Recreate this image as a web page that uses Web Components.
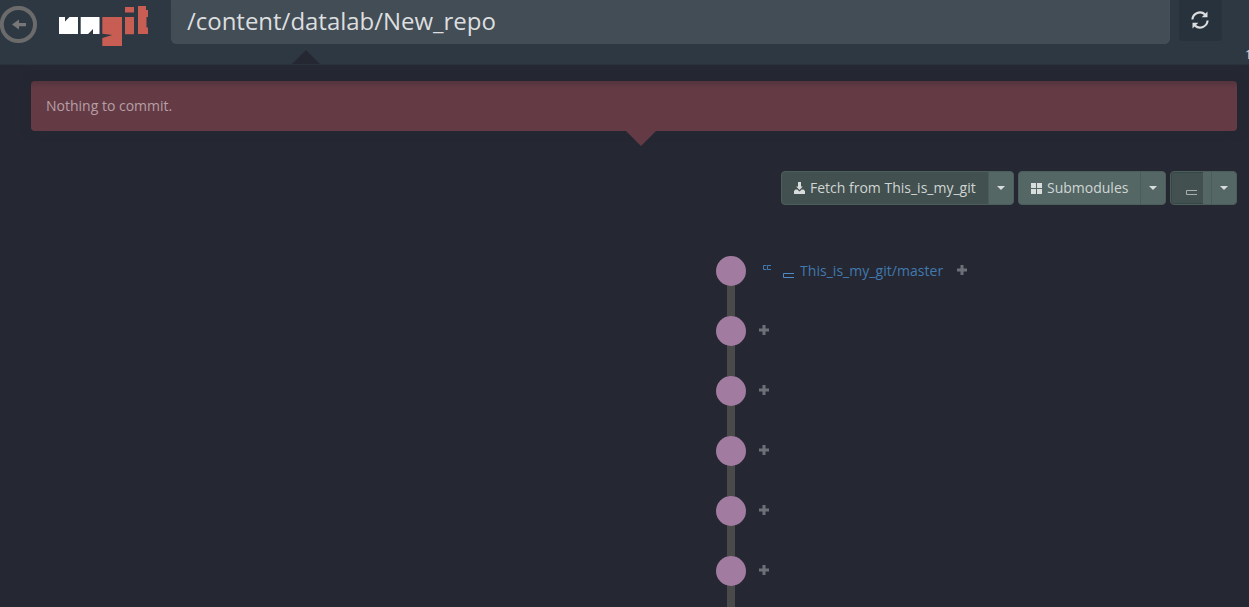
<!DOCTYPE html>
<html lang="en">
<head>
<meta charset="utf-8">
<title>ungit</title>
<style>
html, body { margin: 0; height: 100%; overflow: hidden; background: #252833; }
body { font: 14px/20px "Open Sans", "Noto Sans", sans-serif; color: #d8d8d8; }
</style>
</head>
<body>
<ungit-app></ungit-app>
<script>
function define(name, css, html) {
  const template = document.createElement('template');
  template.innerHTML = `<style>*{box-sizing:border-box}svg{display:block;flex:none}${css}</style>${html}`;
  customElements.define(name, class extends HTMLElement {
    constructor() {
      super();
      this.attachShadow({ mode: 'open' }).append(template.content.cloneNode(true));
    }
  });
}

define('back-button', ':host{display:block;width:38px;height:38px}', `
<svg width="38" height="38" viewBox="0 0 38 38"><circle cx="18.4" cy="18.5" r="16.6" fill="none" stroke="#6b6b6b" stroke-width="4"/><path d="M12 18.500l7-5v3.400h7v3.300h-7v3.300z" fill="#777"/></svg>`);

define('ungit-logo', ':host{display:block;width:92px;height:42px}', `
<svg width="92" height="42" viewBox="0 0 92 42">
<path fill="#fff" d="M1 11h6v4.500l4.500-4.500H20v17H1zM22.700 11H41.500v17H35v-5l-5 5h-7.300z"/>
<path fill="#c75d53" d="M44.300 11H64v29H44.300v-8l10-3-10-1.200zM67 1h9v5.500h-9zM67 11h9v17.300h-9zM80 0h8v4h2v7h-1.500v10.500H90v6.500H80z"/>
</svg>`);

define('path-field', ':host{display:block;width:999px;height:44px;padding:0 16px;border-radius:0 0 6px 6px;background:#434d56;color:#dcdedf;font-size:24px;line-height:41px;letter-spacing:-.02px;box-shadow:inset 0 0 1px #58616a}', '<slot></slot>');

define('refresh-button', ':host{display:flex;align-items:center;justify-content:center;width:43px;height:41px;padding:0 1px 1px 0;border-radius:0 0 4px 4px;background:#28323c}', `
<svg width="18" height="18" viewBox="0 0 18 18"><g fill="none" stroke="#dedede" stroke-width="2.100"><path d="M1.400 8.500A7.600 7.600 0 0 1 14 3.400M16.600 9.500A7.600 7.600 0 0 1 4 14.600"/></g><path fill="#dedede" d="M16.500.500v5.800h-5.800zM1.500 17.500v-5.800h5.800z"/></svg>`);

define('top-bar', `
:host{display:flex;align-items:flex-start;height:65px;background:#2d3843;border-bottom:1px solid #29323d;position:relative;overflow:hidden}
back-button{margin-top:6px}ungit-logo{margin:6px 0 0 20px}path-field{margin-left:21px}refresh-button{margin-left:9px}
.arrow{position:absolute;left:291px;bottom:-1px;width:30px;height:15px;background:#252833;clip-path:polygon(50% 0,100% 100%,0 100%)}
.count{position:absolute;left:1245px;top:46px;font-size:12px;line-height:17px;color:#d8dada}`, `
<back-button></back-button><ungit-logo></ungit-logo><path-field>/content/datalab/New_repo</path-field><refresh-button></refresh-button><span class="arrow"></span><span class="count">1</span>`);

define('commit-notice', `
:host{display:block;position:relative;height:50px;padding:15px;border-radius:4px;background:linear-gradient(#55343e,#643b45 8px);color:#b69fa5;box-shadow:0 0 10px #23262f}
.arrow{position:absolute;left:595px;top:50px;width:30px;height:15px;background:#643b45;clip-path:polygon(0 0,100% 0,50% 100%)}`, '<slot></slot><span class="arrow"></span>');

define('split-button', `
:host{display:flex;height:34px;border:1px solid #4c5e5c;border-radius:4px;background:#546765;overflow:hidden;color:#d0d5d4}
.main{flex:1;display:flex;align-items:center;padding-left:12px;white-space:nowrap}
.main ::slotted(svg){display:block;flex:none;margin-right:5px}
:host([dark]) .main{background:#42504f}
.toggle{width:25px;display:flex;align-items:center;justify-content:center;border-left:1px solid #4a5c5a}
:host([compact]) .main{flex:none;width:32px;padding:8px 0 0 14px;background:#42504f;border:1px solid #384644;border-right:0}
:host([compact]) .main ::slotted(svg){margin-right:0}
:host([compact]) .toggle{margin-left:8px}`, `
<div class="main"><slot></slot></div><div class="toggle"><svg width="8" height="4" viewBox="0 0 8 4"><path d="M0 0h8L4 4z" fill="#d8dddc"/></svg></div>`);

define('action-bar', ':host{display:flex;justify-content:flex-end;gap:4px}.fetch{width:233px}.modules{width:148px}.last{width:67px}', `
<split-button class="fetch" dark><svg width="11" height="12" viewBox="0 0 11 12"><path fill="#d8dddc" d="M4 0h3v4.500h1.800L5.500 8 2.200 4.500H4zM1.500 7.500h1.800L5.500 9.500l2.200-2h1.800L11 9v3H0V9z"/></svg>Fetch from This_is_my_git</split-button>
<split-button class="modules"><svg width="11" height="11" viewBox="0 0 11 11"><path fill="#d8dddc" d="M0 0h5v5H0zM6 0h5v5H6zM0 6h5v5H0zM6 6h5v5H6z"/></svg>Submodules</split-button>
<split-button class="last" compact><svg width="11" height="5" viewBox="0 0 11 5"><path d="M11 .5H.5v4H11" fill="none" stroke="#a8b0af"/></svg></split-button>`);

define('plus-mark', ':host{display:block;width:10px;height:10px}', `
<svg width="10" height="10" viewBox="0 0 10 10"><path d="M3.500 0h3v3.500H10v3H6.500V10h-3V6.500H0v-3h3.500z" fill="#6e7077"/></svg>`);

define('commit-node', `
:host{display:flex;height:60px;align-items:flex-start;background:linear-gradient(#4a4a4a,#4a4a4a) 11px 15px/8px 60px no-repeat}
.dot{flex:none;width:30px;height:30px;border-radius:50%;background:#a27ba0}
.info{display:flex;height:30px;align-items:center;margin-left:13px;padding-bottom:2px}`, '<span class="dot"></span><div class="info"><slot></slot><plus-mark></plus-mark></div>');

define('ref-label', `
:host{display:flex;align-items:center;height:30px;color:#4279ae;margin:2px 14px 0 4px}
.tag{margin:-7px 13px 0 0}.branch{margin:9px 6px 0 -1px}.name{letter-spacing:.04px}`, `
<svg class="tag" width="8" height="5" viewBox="0 0 8 5"><path d="M3.500 .5H.5v4h3M8 .5H4.500v4H8" fill="none" stroke="#4279ae"/></svg>
<svg class="branch" width="11" height="5" viewBox="0 0 11 5"><path d="M11 .5H.5v4H11" fill="none" stroke="#4b8bca"/></svg><span class="name"><slot></slot></span>`);

define('commit-graph', ':host{display:block}', `
<commit-node><ref-label>This_is_my_git/master</ref-label></commit-node>
<commit-node></commit-node><commit-node></commit-node><commit-node></commit-node><commit-node></commit-node><commit-node></commit-node>`);

define('ungit-app', `
:host{display:flex;flex-direction:column;height:607px;overflow:hidden}
top-bar{flex:none}
main{padding:16px 12px 0 31px}
action-bar{margin-top:40px}
commit-graph{margin:51px 0 0 685px}`, `
<top-bar></top-bar><main><commit-notice>Nothing to commit.</commit-notice><action-bar></action-bar><commit-graph></commit-graph></main>`);
</script>
</body>
</html>
